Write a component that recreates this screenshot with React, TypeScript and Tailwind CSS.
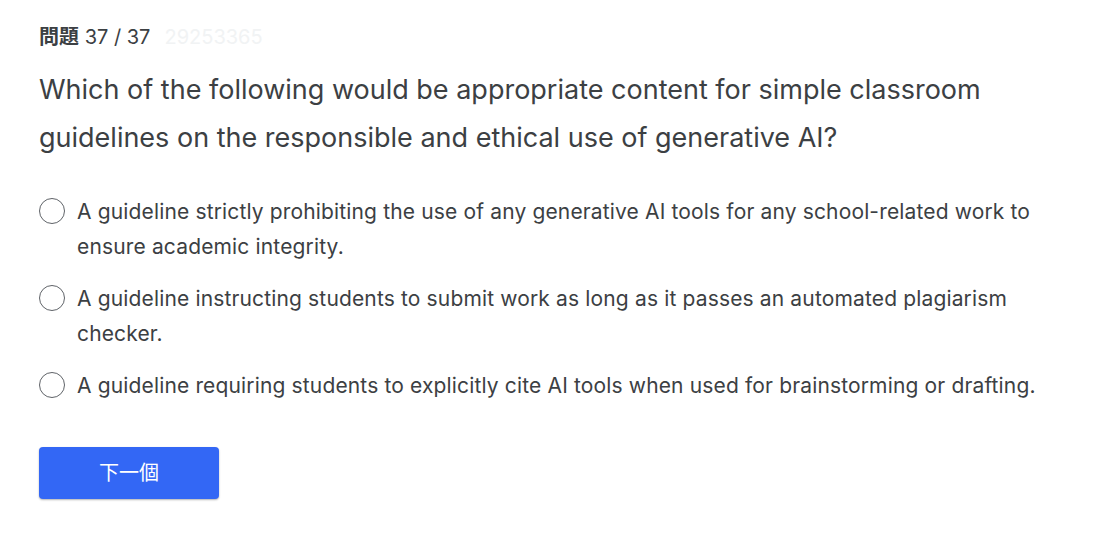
export default function App() {
  const options = [
    'A guideline strictly prohibiting the use of any generative AI tools for any school-related work to ensure academic integrity.',
    'A guideline instructing students to submit work as long as it passes an automated plagiarism checker.',
    'A guideline requiring students to explicitly cite AI tools when used for brainstorming or drafting.',
  ];
  return (
    <div className="min-h-[544px] bg-white pl-[39px] pr-[60px] pt-[24px] text-[#3c4043]" style={{ fontFamily: 'Inter, "Noto Sans CJK TC", sans-serif' }}>
      <div className="flex items-center gap-[14px] text-[20px] leading-[26px]">
        <span className="text-[#3c4043]">
          <span className="font-bold">問題</span> 37 / 37
        </span>
        <span className="text-[#f1f3f4]">29253365</span>
      </div>
      <h1 className="mt-[16px] max-w-[980px] text-[27px] leading-[48px] text-[#3c4043]">
        Which of the following would be appropriate content for simple classroom guidelines on the responsible and ethical use of generative AI?
      </h1>
      <div className="mt-[32px] flex flex-col gap-[17px]">
        {options.map((o) => (
          <label key={o} className="flex items-start gap-[12px] cursor-pointer">
            <span className="mt-[4px] h-[26px] w-[26px] shrink-0 rounded-full border-[1.5px] border-[#5f6368]" />
            <span className="max-w-[975px] text-[21px] leading-[35px] tracking-[0.15px] text-[#3c4043]">{o}</span>
          </label>
        ))}
      </div>
      <button className="mt-[44px] h-[52px] w-[180px] rounded-[4px] bg-[#3367f5] text-[20px] text-white shadow-[0_1px_2px_rgba(0,0,0,0.3)]">
        下一個
      </button>
    </div>
  );
}
